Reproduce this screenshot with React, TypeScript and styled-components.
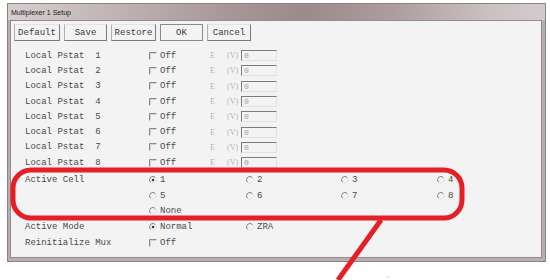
import React from 'react';
import styled, { createGlobalStyle } from 'styled-components';

const GlobalStyle = createGlobalStyle`
  html, body {
    margin: 0;
    padding: 0;
    background: #ffffff;
  }
  body {
    width: 550px;
    height: 280px;
    overflow: hidden;
    position: relative;
    font-family: "Liberation Mono", "DejaVu Sans Mono", monospace;
  }
`;

const Page = styled.div`
  position: relative;
  width: 550px;
  height: 280px;
  padding: 3px 0 0 7px;
  box-sizing: border-box;
`;

const Window = styled.div`
  width: 539px;
  height: 259px;
  box-sizing: border-box;
  border: 1px solid #8d8386;
  background: #b8adaf;
  display: flex;
  flex-direction: column;
  padding: 0 3px 3px 2px;
`;

const TitleBar = styled.div`
  height: 16px;
  flex: none;
  display: flex;
  align-items: center;
  padding-left: 3px;
  margin: 0 -3px 0 -2px;
  background: linear-gradient(to right, #d6cfcf 0%, #c2b6b6 18%, #a99899 40%, #9d8a8b 55%, #ad9d9e 72%, #cbc2c2 90%, #d3cccc 100%);
  font-family: "Liberation Sans", Arial, sans-serif;
  font-size: 7px;
  color: #1e1e1e;
`;

const Body = styled.div`
  flex: 1;
  background: #f3f3f3;
  border: 1px solid #958b8d;
  padding: 3px 0 0 3px;
  display: flex;
  flex-direction: column;
`;

const Toolbar = styled.div`
  display: flex;
  gap: 4px;
  height: 17px;
  margin-bottom: 7px;
`;

const Button = styled.div<{ $w: number; $focused?: boolean }>`
  width: ${p => p.$w}px;
  box-sizing: border-box;
  display: flex;
  align-items: center;
  justify-content: center;
  font-size: 9px;
  color: #3a3a3a;
  border: 1px solid;
  border-color: ${p => (p.$focused ? '#8a8a8a' : '#e4e4e4 #7a7a7a #7a7a7a #b0b0b0')};
  background: #f3f3f3;
`;

const Rows = styled.div`
  display: flex;
  flex-direction: column;
  padding-left: 11px;
`;

const Row = styled.div<{ $h: number; $gap?: number }>`
  display: flex;
  align-items: center;
  height: ${p => p.$h}px;
  margin-top: ${p => p.$gap ?? 0}px;
  font-size: 9px;
  color: #4a4a4a;
  white-space: pre;
`;

const Label = styled.div`
  width: 124px;
  flex: none;
`;

const Cell = styled.div<{ $w: number }>`
  width: ${p => p.$w}px;
  flex: none;
  display: flex;
  align-items: center;
  gap: 3px;
`;

const Faint = styled.span<{ $w: number }>`
  width: ${p => p.$w}px;
  flex: none;
  font-family: "Liberation Serif", "Times New Roman", serif;
  font-size: 8px;
  color: #b4b4b4;
`;

const Field = styled.div`
  width: 36px;
  height: 11px;
  box-sizing: border-box;
  border: 1px solid;
  border-color: #7c7c7c #e2e2e2 #e2e2e2 #7c7c7c;
  font-size: 8px;
  color: #a0a0a0;
  padding-left: 2px;
  line-height: 9px;
`;

const Annotation = styled.svg`
  position: absolute;
  left: 0;
  top: 0;
  pointer-events: none;
`;

const CheckBox = () => (
  <svg width="8" height="8" viewBox="0 0 8 8">
    <path d="M0.5 7.5 V0.5 H7.5" fill="none" stroke="#8a8a8a" strokeWidth="1" />
    <path d="M1.5 7 V1.5 H7" fill="none" stroke="#d0d0d0" strokeWidth="1" />
  </svg>
);

const Radio = ({ on }: { on?: boolean }) => (
  <svg width="8" height="8" viewBox="0 0 8 8">
    <circle cx="4" cy="4" r="3.3" fill="none" stroke="#e0e0e0" strokeWidth="0.8" />
    <path d="M1.4 6.2 A3.3 3.3 0 0 1 6.3 1.5" fill="none" stroke="#7a7a7a" strokeWidth="0.9" />
    {on && <circle cx="4" cy="4" r="1.3" fill="#3a3a3a" />}
  </svg>
);

const pstats = [1, 2, 3, 4, 5, 6, 7, 8];

const RadioOpt = ({ w, text, on }: { w: number; text: string; on?: boolean }) => (
  <Cell $w={w}>
    <Radio on={on} />
    <span>{text}</span>
  </Cell>
);

export default function App() {
  return (
    <>
      <GlobalStyle />
      <Page>
        <Window>
          <TitleBar>Multiplexer 1 Setup</TitleBar>
          <Body>
            <Toolbar>
              <Button $w={46}>Default</Button>
              <Button $w={43}>Save</Button>
              <Button $w={45}>Restore</Button>
              <Button $w={43} $focused>OK</Button>
              <Button $w={44}>Cancel</Button>
            </Toolbar>
            <Rows>
              {pstats.map(n => (
                <Row key={n} $h={15.3}>
                  <Label>{`Local Pstat  ${n}`}</Label>
                  <Cell $w={61}>
                    <CheckBox />
                    <span>Off</span>
                  </Cell>
                  <Faint $w={17}>E</Faint>
                  <Faint $w={14}>(V)</Faint>
                  <Field>0</Field>
                </Row>
              ))}
              <Row $h={16} $gap={2}>
                <Label>Active Cell</Label>
                <RadioOpt w={97} text="1" on />
                <RadioOpt w={95} text="2" />
                <RadioOpt w={96} text="3" />
                <RadioOpt w={40} text="4" />
              </Row>
              <Row $h={15}>
                <Label />
                <RadioOpt w={97} text="5" />
                <RadioOpt w={95} text="6" />
                <RadioOpt w={96} text="7" />
                <RadioOpt w={40} text="8" />
              </Row>
              <Row $h={16}>
                <Label />
                <RadioOpt w={97} text="None" />
              </Row>
              <Row $h={16}>
                <Label>Active Mode</Label>
                <RadioOpt w={97} text="Normal" on />
                <RadioOpt w={95} text="ZRA" />
              </Row>
              <Row $h={16}>
                <Label>Reinitialize Mux</Label>
                <Cell $w={61}>
                  <CheckBox />
                  <span>Off</span>
                </Cell>
              </Row>
            </Rows>
          </Body>
        </Window>
        <Annotation width="550" height="280" viewBox="0 0 550 280">
          <rect x="13" y="170" width="449" height="48" rx="18" ry="18" fill="none" stroke="#e61e26" strokeWidth="5" />
          <line x1="381" y1="220" x2="338" y2="280" stroke="#e61e26" strokeWidth="5" />
          <path d="M386 278 l2 -2 l2 2" fill="none" stroke="#cfcfcf" strokeWidth="0.8" />
        </Annotation>
      </Page>
    </>
  );
}
